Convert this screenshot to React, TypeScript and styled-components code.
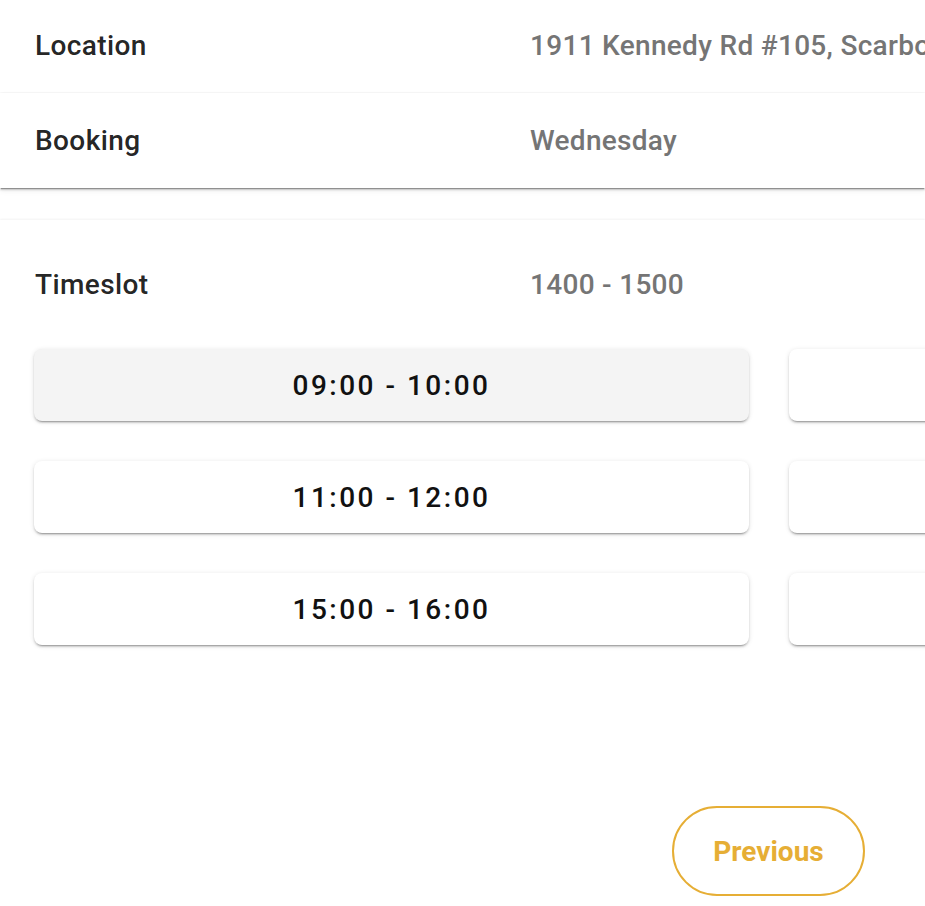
import React from "react";
import styled, { createGlobalStyle } from "styled-components";

const GlobalStyle = createGlobalStyle`
  html, body {
    margin: 0;
    padding: 0;
    background: #ffffff;
    overflow: hidden;
  }
  body {
    font-family: Roboto, "Liberation Sans", Arial, sans-serif;
    -webkit-font-smoothing: antialiased;
  }
`;

const Page = styled.div`
  width: 925px;
  height: 906px;
  overflow: hidden;
  background: #fff;
`;

const SummaryCard = styled.div<{ $strong?: boolean }>`
  background: #fff;
  height: ${(p) => (p.$strong ? "95px" : "92px")};
  margin-bottom: ${(p) => (p.$strong ? "32px" : "1px")};
  box-shadow: ${(p) =>
    p.$strong
      ? "0 2px 1px -1px rgba(0,0,0,0.3), 0 2px 2px rgba(0,0,0,0.16), 0 3px 6px rgba(0,0,0,0.06)"
      : "0 1px 3px rgba(0,0,0,0.06)"};
  display: flex;
  align-items: center;
  position: relative;
`;

const InfoRow = styled.div`
  display: grid;
  grid-template-columns: 495px 1fr;
  align-items: center;
  padding-left: 35px;
  white-space: nowrap;
  width: 100%;
  box-sizing: border-box;
`;

const Label = styled.span`
  font-size: 28px;
  line-height: 34px;
  font-weight: 500;
  letter-spacing: 0.4px;
  color: rgba(0, 0, 0, 0.87);
`;

const Value = styled.span`
  font-size: 28px;
  line-height: 34px;
  font-weight: 500;
  letter-spacing: 0.3px;
  color: #757575;
  overflow: hidden;
`;

const Panel = styled.div`
  background: #fff;
  box-shadow: 0 -1px 2px rgba(0, 0, 0, 0.05);
  padding-top: 48px;
`;

const SlotGrid = styled.div`
  display: grid;
  grid-template-columns: 715px 715px;
  column-gap: 40px;
  row-gap: 40px;
  padding-left: 34px;
  margin-top: 47px;
`;

const SlotButton = styled.button<{ $active?: boolean }>`
  height: 72px;
  border: none;
  border-radius: 8px;
  background: ${(p) => (p.$active ? "#f4f4f4" : "#ffffff")};
  box-shadow: 0 3px 1px -2px rgba(0, 0, 0, 0.2), 0 2px 2px 0 rgba(0, 0, 0, 0.14),
    0 1px 5px 0 rgba(0, 0, 0, 0.12);
  font-family: Roboto, "Liberation Sans", Arial, sans-serif;
  font-size: 28px;
  font-weight: 500;
  letter-spacing: 2.5px;
  color: #111;
  cursor: pointer;
  padding: 0;
`;

const Footer = styled.div`
  display: flex;
  justify-content: flex-end;
  padding-right: 60px;
  margin-top: 161px;
`;

const OutlineButton = styled.button`
  width: 193px;
  height: 90px;
  border: 2px solid #e6ae35;
  border-radius: 45px;
  background: #fff;
  color: #e6ae35;
  font-family: Roboto, "Liberation Sans", Arial, sans-serif;
  font-size: 28px;
  font-weight: 700;
  cursor: pointer;
  padding: 0;
`;

const slots = [
  "09:00 - 10:00",
  "10:00 - 11:00",
  "11:00 - 12:00",
  "14:00 - 15:00",
  "15:00 - 16:00",
  "16:00 - 17:00",
];

export default function App() {
  return (
    <Page>
      <GlobalStyle />
      <SummaryCard>
        <InfoRow>
          <Label>Location</Label>
          <Value>1911 Kennedy Rd #105, Scarborough, ON M1P 2L9</Value>
        </InfoRow>
      </SummaryCard>
      <SummaryCard $strong>
        <InfoRow>
          <Label>Booking</Label>
          <Value>Wednesday</Value>
        </InfoRow>
      </SummaryCard>
      <Panel>
        <InfoRow>
          <Label>Timeslot</Label>
          <Value>1400 - 1500</Value>
        </InfoRow>
        <SlotGrid>
          {slots.map((s, i) => (
            <SlotButton key={s} $active={i === 0}>
              {s}
            </SlotButton>
          ))}
        </SlotGrid>
        <Footer>
          <OutlineButton>Previous</OutlineButton>
        </Footer>
      </Panel>
    </Page>
  );
}
